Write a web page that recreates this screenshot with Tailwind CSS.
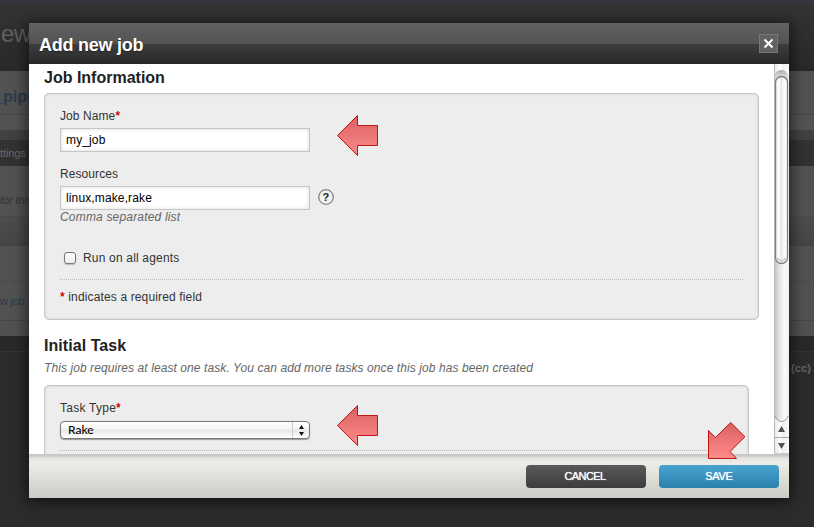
<!DOCTYPE html>
<html lang="en">
<head>
<meta charset="utf-8">
<title>Add new job</title>
<script src="https://cdn.jsdelivr.net/npm/@tailwindcss/browser@4"></script>
</head>
<body class="relative h-[527px] w-[814px] overflow-hidden bg-[#2c2c2c] font-['Liberation_Sans',Arial,sans-serif] text-[12px] leading-[14px] tracking-[0.085px] text-[#333]">

<!-- Dimmed page -->
<div class="flex h-[527px] flex-col overflow-hidden whitespace-nowrap" aria-hidden="true">
  <div class="h-[3px] shrink-0 bg-[#39343d]"></div>
  <div class="h-[68px] shrink-0 bg-linear-to-b from-[#343434] to-[#292929] pt-[18px] pl-px text-[24px] leading-[26px] tracking-[-0.5px] text-[#606060]">ew</div>
  <div class="h-[44px] shrink-0 border-b border-[#474747] bg-[#525252] pt-[17px] text-[16px] font-bold leading-[18px] text-[#2c3a4a]"><span class="ml-[-6px]">_pipeline</span></div>
  <div class="h-[15px] shrink-0 bg-[#535353]"></div>
  <div class="h-[10px] shrink-0 bg-[#414141]"></div>
  <div class="h-[26px] shrink-0 bg-[#323232] pt-[6px] text-[11px] leading-[14px] tracking-[-0.1px] text-[#686868]">ttings</div>
  <div class="h-[50px] shrink-0 bg-[#525252] pt-[27px] text-[11px] italic tracking-[-0.1px] text-[#333]">for this job</div>
  <div class="h-[30px] shrink-0 border-t border-[#484848] bg-linear-to-b from-[#4d4d4d] to-[#454545]"></div>
  <div class="h-[36px] shrink-0 border-b border-dotted border-[#454545] bg-[#525252]"></div>
  <div class="h-[39px] shrink-0 border-b border-[#464646] bg-[#525252] pt-[12px] text-[11px] tracking-[-0.2px] text-[#2c3a4a]">w job</div>
  <div class="h-[15px] shrink-0 bg-[#515151]"></div>
  <div class="h-[16px] shrink-0 border-b border-[#333] bg-[#292929]"></div>
  <div class="flex justify-end pt-[9px] pr-[3px] text-[11px] font-bold text-[#666]">(cc)</div>
</div>

<!-- Dialog -->
<section class="absolute top-[23px] left-[29px] flex h-[475px] w-[760px] flex-col whitespace-nowrap bg-white shadow-[0_2px_14px_2px_rgba(0,0,0,0.6)]">
  <header class="flex h-[41px] shrink-0 items-center justify-between bg-[linear-gradient(#626262_0,#525252_21px,#3d3d3d_21px,#292929_41px)] pr-[11px] pl-[10px]">
    <h1 class="pt-[3px] text-[18px] font-bold leading-[20px] tracking-[-0.25px] text-white [text-shadow:0_1px_1px_#222]">Add new job</h1>
    <button class="flex size-[19px] items-center justify-center border border-[#777] bg-[#626262]" aria-label="Close">
      <svg width="11" height="11" viewBox="0 0 11 11" fill="none" stroke="#fff" stroke-width="2"><path d="M1.500 1.500 9.500 9.500M9.500 1.500 1.500 9.500"/></svg>
    </button>
  </header>

  <div class="flex h-[390px] shrink-0 overflow-hidden">
    <main class="w-[745px] shrink-0 overflow-hidden pt-[5px] pl-[15px]">
      <h2 class="h-[24px] text-[16px] font-bold leading-[18px] tracking-[0px] text-[#222]">Job Information</h2>
      <fieldset class="h-[227px] w-[715px] rounded-[5px] border border-[#c6c6c6] bg-[#ededed] px-[15px] pt-[15px] shadow-[inset_0_0_3px_#d0d0d0]">
        <label class="block h-[19px]">Job Name<span class="text-[#c00] [text-shadow:0_0_0.5px_#c00]">*</span></label>
        <div class="h-[24px] w-[250px] border border-[#c6c6c6] bg-white px-[5px] pt-[4px] tracking-[0.13px] text-black shadow-[inset_0_0_4px_#ddd]">my_job</div>
        <label class="mt-[15px] block h-[19px]">Resources</label>
        <div class="flex items-center gap-[8px]">
          <div class="h-[24px] w-[250px] border border-[#c6c6c6] bg-white px-[5px] pt-[4px] tracking-[0.13px] text-black shadow-[inset_0_0_4px_#ddd]">linux,make,rake</div>
          <svg class="mt-[-2px]" width="16" height="16" viewBox="0 0 16 16"><circle cx="8" cy="8" r="7.300" fill="#f1f1f1" stroke="#858585" stroke-width="1.300"/><text x="8" y="11.800" text-anchor="middle" font-size="11" font-weight="bold" fill="#222">?</text></svg>
        </div>
        <p class="h-[33px] italic tracking-[0.18px] text-[#666]">Comma separated list</p>
        <label class="flex h-[37px] items-center gap-[7px] border-b border-dotted border-[#b8b8b8] pb-[6px] pl-[4px] tracking-[0.18px]">
          <span class="size-[12px] rounded-[3px] border border-[#777] bg-linear-to-b from-white to-[#eee] shadow-[0_1px_1px_#bbb]"></span>
          <span>Run on all agents</span>
        </label>
        <p class="pt-[10px] tracking-[0.14px]"><span class="text-[#c00] [text-shadow:0_0_0.5px_#c00]">*</span> indicates a required field</p>
      </fieldset>

      <h2 class="mt-[17px] h-[24px] text-[16px] font-bold leading-[18px] tracking-[0.05px] text-[#222]">Initial Task</h2>
      <p class="h-[24px] italic text-[#666]">This job requires at least one task. You can add more tasks once this job has been created</p>
      <fieldset class="h-[110px] w-[705px] rounded-[5px] border border-[#c6c6c6] bg-[#ededed] px-[15px] pt-[15px] shadow-[inset_0_0_3px_#d0d0d0]">
        <label class="block h-[20px] tracking-[0.25px]">Task Type<span class="text-[#c00] [text-shadow:0_0_0.5px_#c00]">*</span></label>
        <div class="flex h-[18px] w-[250px] overflow-hidden rounded-[4px] border border-[#777] bg-[linear-gradient(#fff,#f4f4f4_45%,#e6e6e6_50%,#fff)] text-black shadow-[0_1px_1px_#999]">
          <span class="flex-1 pl-[7px] font-['Lato',sans-serif] text-[12px] font-medium leading-[15px] tracking-normal">Rake</span>
          <span class="flex w-[17px] items-center justify-center border-l border-[#ccc]">
            <svg width="5" height="11" viewBox="0 0 5 11" fill="#111"><path d="M2.5 0 5 4H0zM2.5 11 5 7H0z"/></svg>
          </span>
        </div>
        <div class="mt-[11px] border-t border-dotted border-[#b8b8b8]"></div>
      </fieldset>
    </main>

    <div class="flex w-[15px] shrink-0 flex-col" aria-hidden="true">
      <svg width="15" height="390" viewBox="0 0 15 390">
        <defs>
          <linearGradient id="track"><stop offset="0" stop-color="#bdbdbd"/><stop offset=".3" stop-color="#dedede"/><stop offset=".7" stop-color="#fafafa"/><stop offset="1" stop-color="#f0f0f0"/></linearGradient>
          <linearGradient id="thumb"><stop offset="0" stop-color="#ddd"/><stop offset=".2" stop-color="#fff"/><stop offset=".4" stop-color="#f5f5f5"/><stop offset=".45" stop-color="#ddd"/><stop offset=".6" stop-color="#f6f6f6"/><stop offset="1" stop-color="#fff"/></linearGradient>
          <linearGradient id="btn"><stop offset="0" stop-color="#e5e5e5"/><stop offset=".45" stop-color="#fff"/><stop offset=".55" stop-color="#eee"/><stop offset="1" stop-color="#fafafa"/></linearGradient>
          <linearGradient id="cap" x2="0" y2="1"><stop stop-color="#aaa"/><stop offset=".5" stop-color="#d8d8d8"/><stop offset="1" stop-color="#ccc"/></linearGradient>
        </defs>
        <path fill="url(#btn)" d="M0 0h15v390H0z"/>
        <path fill="url(#track)" d="M0 12Q2 6 7.500 6T15 12V351Q13 357 7.500 357T0 351z"/>
        <path fill="url(#cap)" d="M1 13Q2 6 7.500 6T14 13V18H1z"/>
        <path fill="none" stroke="#999" d="M1 352Q3 357.500 7.500 357.500T14 352"/>
        <path stroke="#bbb" d="M.5 0v390"/>
        <rect x="1.500" y="12.500" width="12" height="187" rx="6" fill="url(#thumb)" stroke="#808080" stroke-width="1.300"/>
        <path d="M3 194q4.500 6 9 0" fill="none" stroke="#ccc" stroke-width="2"/>
        <path stroke="#aaa" d="M0 373.500h15"/>
        <path stroke="#ccc" d="M0 389.500h15"/>
        <path fill="#505050" d="M7.500 362 11 368H4zM7.500 385 11 379H4z"/>
      </svg>
    </div>
  </div>

  <footer class="flex h-[44px] shrink-0 justify-end gap-[13px] bg-[linear-gradient(#c6c6c4_0,#cacac8_2px,#e2e3de_4px,#ecede7_9px,#cbccc6_44px)] pt-[11px] pr-[10px] text-[11px] font-medium tracking-[-0.6px] text-white">
    <button class="h-[23px] w-[120px] rounded-[4px] bg-linear-to-b from-[#5a5a5a] to-[#3c3c3c] pr-[2px] leading-[23px] [text-shadow:0_0_1px_#fff]">CANCEL</button>
    <button class="h-[23px] w-[120px] rounded-[4px] bg-linear-to-b from-[#4aa3cf] to-[#2a80ad] leading-[23px] tracking-[-0.3px] [text-shadow:0_0_1px_#fff]">SAVE</button>
  </footer>
</section>

<!-- Pointer arrows floating over the dialog -->
<svg class="absolute inset-0" width="814" height="527" viewBox="0 0 814 527" stroke="#c01515">
  <defs><linearGradient id="arrow" x2="0" y2="1"><stop stop-color="#d96060"/><stop offset="1" stop-color="#ff8c8c"/></linearGradient></defs>
  <path fill="url(#arrow)" d="M337.500 135.500 357.500 115.500V125.500H377.500V145.500H357.500V155.500z"/>
  <path fill="url(#arrow)" d="M337.500 425.500 357.500 405.500V415.500H377.500V435.500H357.500V445.500z"/>
  <path fill="url(#arrow)" d="M708.500 458.500V430.500L715.500 437.500 730.700 422.500 745 436.700 730 451.500 736.500 458.500z"/>
</svg>
</body>
</html>
